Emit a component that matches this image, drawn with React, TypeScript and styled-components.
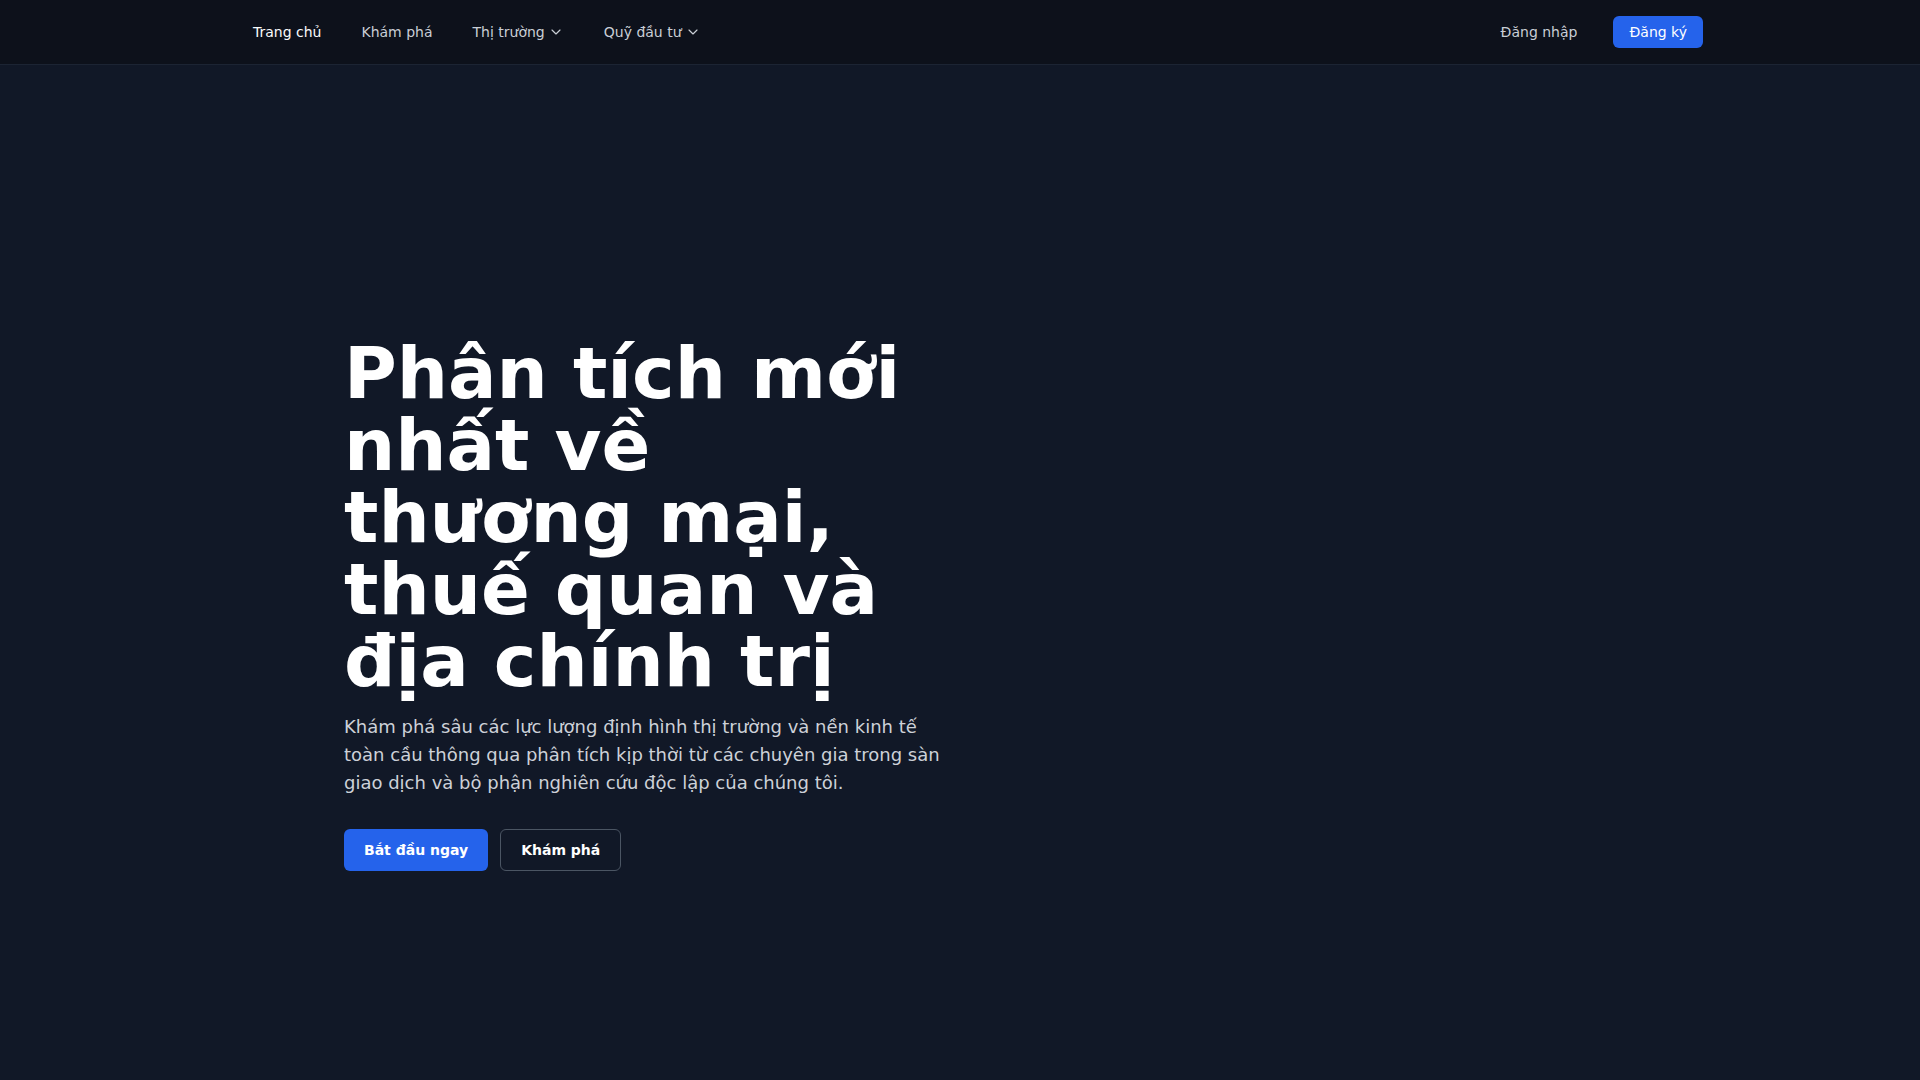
import styled, { createGlobalStyle } from 'styled-components'
import { ChevronDown } from 'lucide-react'

const GlobalStyle = createGlobalStyle`
  * {
    box-sizing: border-box;
  }
  body {
    margin: 0;
    background: #111827;
    font-family: 'DejaVu Sans', 'Noto Sans', sans-serif;
    color: #fff;
  }
`

const links = [
  { label: 'Trang chủ', active: true },
  { label: 'Khám phá' },
  { label: 'Thị trường', menu: true },
  { label: 'Quỹ đầu tư', menu: true }
]

export default function App() {
  return (
    <>
      <GlobalStyle />
      <Header>
        <HeaderInner>
          <NavList>
            {links.map((link) => (
              <NavLink key={link.label} active={link.active}>
                {link.label}
                {link.menu && <ChevronDown size={16} strokeWidth={1.75} />}
              </NavLink>
            ))}
          </NavList>
          <Actions>
            <LoginLink>Đăng nhập</LoginLink>
            <SignupButton>Đăng ký</SignupButton>
          </Actions>
        </HeaderInner>
      </Header>
      <Hero>
        <HeroInner>
          <HeroContent>
            <Title>Phân tích mới nhất về thương mại, thuế quan và địa chính trị</Title>
            <Lead>
              Khám phá sâu các lực lượng định hình thị trường và nền kinh tế toàn cầu thông qua
              phân tích kịp thời từ các chuyên gia trong sàn giao dịch và bộ phận nghiên cứu độc
              lập của chúng tôi.
            </Lead>
            <ButtonRow>
              <PrimaryButton>Bắt đầu ngay</PrimaryButton>
              <OutlineButton>Khám phá</OutlineButton>
            </ButtonRow>
          </HeroContent>
          <div />
        </HeroInner>
      </Hero>
    </>
  )
}

const Header = styled.header`
  height: 65px;
  background: #0d111b;
  border-bottom: 1px solid #1c2433;
`

const HeaderInner = styled.div`
  max-width: 1536px;
  height: 64px;
  margin: 0 auto;
  padding: 0 25px 0 24px;
  display: flex;
  align-items: center;
  justify-content: space-between;
`

const NavList = styled.nav`
  display: flex;
  align-items: center;
  margin-left: 17px;
`

const NavLink = styled.a<{ active?: boolean }>`
  display: flex;
  align-items: center;
  gap: 3px;
  padding: 0 20px;
  font-size: 14px;
  color: ${(props) => (props.active ? '#f9fafb' : '#c9ced6')};
  cursor: pointer;

  svg {
    color: #c9ced6;
  }
`

const Actions = styled.div`
  display: flex;
  align-items: center;
  gap: 36px;
`

const LoginLink = styled.a`
  font-size: 14px;
  color: #c9ced6;
  cursor: pointer;
`

const SignupButton = styled.button`
  height: 32px;
  padding: 0 16px;
  border: none;
  border-radius: 6px;
  background: #2563eb;
  color: #fff;
  font-family: inherit;
  font-size: 14px;
  cursor: pointer;
`

const Hero = styled.section`
  min-height: calc(100vh - 2px);
  display: flex;
  align-items: center;
`

const HeroInner = styled.div`
  width: 100%;
  max-width: 1280px;
  margin: 0 auto;
  padding: 0 24px;
  display: grid;
  grid-template-columns: 1fr 1fr;
  gap: 32px;
`

const HeroContent = styled.div`
  min-width: 0;
`

const Title = styled.h1`
  margin: 0;
  font-size: 72px;
  line-height: 72px;
  font-weight: 700;
  color: #fff;
`

const Lead = styled.p`
  margin: 16px 0 0;
  font-size: 18px;
  line-height: 28px;
  color: #cdd1d8;
`

const ButtonRow = styled.div`
  display: flex;
  gap: 12px;
  margin-top: 32px;
`

const PrimaryButton = styled.button`
  height: 42px;
  padding: 0 20px;
  border: none;
  border-radius: 6px;
  background: #2563eb;
  color: #fff;
  font-family: inherit;
  font-size: 14px;
  font-weight: 700;
  cursor: pointer;
`

const OutlineButton = styled(PrimaryButton)`
  background: transparent;
  border: 1px solid #4b5563;
  padding: 0 20px;
`
